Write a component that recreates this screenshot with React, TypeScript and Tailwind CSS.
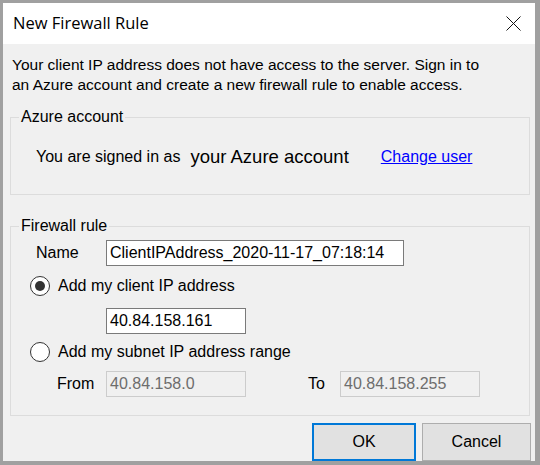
const body = { fontFamily: '"Liberation Sans", Arial, sans-serif' }

function Radio({ checked }: { checked?: boolean }) {
  return (
    <span className="w-[20px] h-[20px] rounded-full border border-[#333333] bg-white flex items-center justify-center shrink-0">
      {checked && <span className="w-[10px] h-[10px] rounded-full bg-[#333333]" />}
    </span>
  )
}

export default function App() {
  return (
    <div className="w-[540px] h-[465px] bg-[#a0a0a0] pl-[3px] pt-[3px] pr-[5px] pb-[4px]" style={body}>
      <div className="w-full h-full bg-[#f0f0f0] flex flex-col text-[16px] text-black">
        <div className="h-[41px] bg-white flex items-center justify-between pl-[10px] pr-[14px] shrink-0">
          <span className="text-[16.5px]" style={{ fontFamily: '"Open Sans", "Noto Sans", sans-serif' }}>New Firewall Rule</span>
          <svg width="15" height="15" viewBox="0 0 15 15" className="mb-[1px]">
            <path d="M0.5 0.5 L14.5 14.5 M14.5 0.5 L0.5 14.5" stroke="#111111" strokeWidth="1" fill="none" />
          </svg>
        </div>
        <div className="px-[9px] pt-[11px] leading-[20px] text-[15.5px]">
          <p>Your client IP address does not have access to the server. Sign in to<br />an Azure account and create a new firewall rule to enable access.</p>
        </div>
        <fieldset className="ml-[7px] mr-[5px] mt-[13px] border border-[#dcdcdc] h-[87px] px-[8px] pt-0 shrink-0">
          <legend className="px-[2px] leading-[18px]">Azure account</legend>
          <div className="flex items-center pl-[17px] mt-[17px]">
            <span>You are signed in as</span>
            <span className="ml-[10px] text-[18.5px]">your Azure account</span>
            <a href="#" className="ml-[32px] text-[#0000ff] underline">Change user</a>
          </div>
        </fieldset>
        <fieldset className="ml-[7px] mr-[5px] mt-[22px] border border-[#dcdcdc] h-[199px] px-[8px] shrink-0">
          <legend className="px-[2px] leading-[18px]">Firewall rule</legend>
          <div className="flex items-center mt-[5px]">
            <span className="w-[87px] pl-[17px]">Name</span>
            <div className="w-[298px] h-[26px] border border-[#7a7a7a] bg-white flex items-center px-[3px]">ClientIPAddress_2020-11-17_07:18:14</div>
          </div>
          <div className="flex items-center gap-[8px] mt-[8px] pl-[11px]">
            <Radio checked />
            <span>Add my client IP address</span>
          </div>
          <div className="ml-[87px] mt-[10px] w-[140px] h-[26px] border border-[#7a7a7a] bg-white flex items-center px-[3px]">40.84.158.161</div>
          <div className="flex items-center gap-[8px] mt-[6px] pl-[11px]">
            <Radio />
            <span>Add my subnet IP address range</span>
          </div>
          <div className="flex items-center mt-[7px]">
            <span className="w-[87px] pl-[38px]">From</span>
            <div className="w-[140px] h-[26px] border border-[#cccccc] flex items-center px-[3px] text-[#6d6d6d]">40.84.158.0</div>
            <span className="ml-[62px] w-[32px]">To</span>
            <div className="w-[140px] h-[26px] border border-[#cccccc] flex items-center px-[3px] text-[#6d6d6d]">40.84.158.255</div>
          </div>
        </fieldset>
        <div className="flex justify-end gap-[6px] mt-[7px] pr-[4px]">
          <button className="w-[104px] h-[38px] border-2 border-[#0078d7] bg-[#e1e1e1]">OK</button>
          <button className="w-[109px] h-[38px] border border-[#adadad] bg-[#e1e1e1]">Cancel</button>
        </div>
      </div>
    </div>
  )
}
